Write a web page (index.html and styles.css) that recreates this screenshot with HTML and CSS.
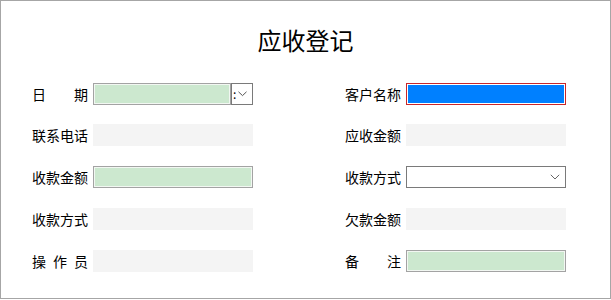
FILE: index.html
```html
<!DOCTYPE html>
<html lang="zh-CN">

<head>
    <meta charset="UTF-8">
    <meta name="viewport" content="width=device-width, initial-scale=1.0">
    <title>应收登记</title>
    <link rel="stylesheet" href="styles.css">
</head>

<body>
    <div class="frame">
        <h1 class="title">应收登记</h1>

        <div class="form-grid">
            <!-- 第一行 -->
            <div class="field">
                <label class="label spread"><span>日</span><span>期</span></label>
                <div class="date-box">
                    <div class="input green date-text"></div>
                    <div class="date-btn">
                        <span class="colon">:</span>
                        <svg width="9" height="6" viewBox="0 0 9 6"><path d="M0.5 0.8 L4.5 4.6 L8.5 0.8" fill="none" stroke="#555" stroke-width="1"/></svg>
                    </div>
                </div>
            </div>
            <div class="field">
                <label class="label">客户名称</label>
                <div class="input focused"></div>
            </div>

            <!-- 第二行 -->
            <div class="field">
                <label class="label">联系电话</label>
                <div class="input readonly"></div>
            </div>
            <div class="field">
                <label class="label">应收金额</label>
                <div class="input readonly"></div>
            </div>

            <!-- 第三行 -->
            <div class="field">
                <label class="label">收款金额</label>
                <div class="input green"></div>
            </div>
            <div class="field">
                <label class="label">收款方式</label>
                <div class="input combo">
                    <svg width="10" height="6" viewBox="0 0 10 6"><path d="M0.8 0.8 L5 5 L9.2 0.8" fill="none" stroke="#666" stroke-width="1"/></svg>
                </div>
            </div>

            <!-- 第四行 -->
            <div class="field">
                <label class="label">收款方式</label>
                <div class="input readonly"></div>
            </div>
            <div class="field">
                <label class="label">欠款金额</label>
                <div class="input readonly"></div>
            </div>

            <!-- 第五行 -->
            <div class="field">
                <label class="label spread"><span>操</span><span>作</span><span>员</span></label>
                <div class="input readonly"></div>
            </div>
            <div class="field">
                <label class="label spread"><span>备</span><span>注</span></label>
                <div class="input green"></div>
            </div>
        </div>
    </div>
</body>

</html>
```

FILE: styles.css
```css
body {
    margin: 0;
    font-family: "Noto Sans CJK SC", "Microsoft YaHei", sans-serif;
    background-color: #ffffff;
    color: #000000;
}

.frame {
    width: 611px;
    height: 299px;
    box-sizing: border-box;
    border: 1px solid #a6a6a6;
}

.title {
    margin: 24px 0 0 0;
    height: 30px;
    line-height: 30px;
    font-size: 24px;
    font-weight: normal;
    text-align: center;
}

.form-grid {
    display: grid;
    grid-template-columns: 221px 221px;
    column-gap: 92px;
    row-gap: 19.75px;
    padding-left: 31px;
    margin-top: 27.5px;
}

.field {
    display: flex;
    align-items: center;
    gap: 5px;
    height: 22px;
}

.label {
    width: 56px;
    font-size: 14px;
    line-height: 22px;
    white-space: nowrap;
}

.spread {
    display: flex;
    justify-content: space-between;
}

.input {
    width: 160px;
    height: 22px;
    box-sizing: border-box;
}

.readonly {
    background-color: #f4f4f4;
}

.green {
    border: 1px solid #a3a3a3;
    box-shadow: inset 0 0 0 1px #f2f7f2;
    background-color: #cce8cf;
    height: 22px;
}

.focused {
    border: 1px solid #c8262a;
    box-shadow: inset 0 0 0 1px #ffffff;
    background-color: #0080ff;
}

.combo {
    border: 1px solid #7a7a7a;
    background-color: #ffffff;
    display: flex;
    justify-content: flex-end;
    align-items: center;
    padding-right: 5px;
}

.date-box {
    display: flex;
    width: 160px;
    height: 22px;
}

.date-text {
    width: 138px;
}

.date-btn {
    width: 22px;
    height: 22px;
    box-sizing: border-box;
    border: 1px solid #7a7a7a;
    display: flex;
    align-items: center;
    gap: 2px;
    padding-left: 1px;
    background-color: #ffffff;
}

.colon {
    font-size: 12px;
    line-height: 12px;
}
```
